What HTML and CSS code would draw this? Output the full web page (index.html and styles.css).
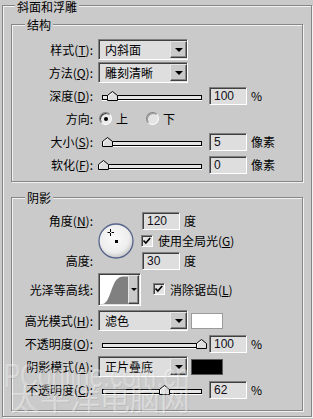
FILE: index.html
```html
<!DOCTYPE html>
<html lang="zh-CN">
<head>
    <meta charset="UTF-8">
    <meta name="viewport" content="width=device-width, initial-scale=1.0">
    <title>斜面和浮雕</title>
    <link rel="stylesheet" href="styles.css">
</head>
<body>
    <div class="group outer">
        <div class="legend outer-legend"><span>斜面和浮雕</span></div>

        <div class="group section first">
            <div class="legend"><span>结构</span></div>
            <div class="rows">
                <div class="row">
                    <span class="lbl">样式(<u>T</u>):</span>
                    <div class="select"><span class="value">内斜面</span><span class="drop"><i></i></span></div>
                </div>
                <div class="row">
                    <span class="lbl">方法(<u>Q</u>):</span>
                    <div class="select"><span class="value">雕刻清晰</span><span class="drop"><i></i></span></div>
                </div>
                <div class="row">
                    <span class="lbl">深度(<u>D</u>):</span>
                    <div class="slider">
                        <span class="thumb" style="left: 9%"><svg width="11" height="10" viewBox="0 0 11 10"><path d="M0.5 9.5V4.5L5.5 0.5L10.5 4.5V9.5Z" fill="#dedede" stroke="#000"/><path d="M1.5 8.5V5L5.5 1.8" fill="none" stroke="#fff"/></svg></span>
                    </div>
                    <span class="field">100</span><span class="unit">%</span>
                </div>
                <div class="row">
                    <span class="lbl">方向:</span>
                    <span class="radio checked"></span><span class="opt">上</span>
                    <span class="radio second"></span><span class="opt">下</span>
                </div>
                <div class="row">
                    <span class="lbl">大小(<u>S</u>):</span>
                    <div class="slider">
                        <span class="thumb" style="left: 4%"><svg width="11" height="10" viewBox="0 0 11 10"><path d="M0.5 9.5V4.5L5.5 0.5L10.5 4.5V9.5Z" fill="#dedede" stroke="#000"/><path d="M1.5 8.5V5L5.5 1.8" fill="none" stroke="#fff"/></svg></span>
                    </div>
                    <span class="field">5</span><span class="unit">像素</span>
                </div>
                <div class="row">
                    <span class="lbl">软化(<u>F</u>):</span>
                    <div class="slider">
                        <span class="thumb" style="left: 0%"><svg width="11" height="10" viewBox="0 0 11 10"><path d="M0.5 9.5V4.5L5.5 0.5L10.5 4.5V9.5Z" fill="#dedede" stroke="#000"/><path d="M1.5 8.5V5L5.5 1.8" fill="none" stroke="#fff"/></svg></span>
                    </div>
                    <span class="field">0</span><span class="unit">像素</span>
                </div>
            </div>
        </div>

        <div class="group section shading">
            <div class="legend"><span>阴影</span></div>
            <div class="rows">
                <div class="angle">
                    <span class="lbl cell top-lbl">角度(<u>N</u>):</span>
                    <div class="dial">
                        <svg width="36" height="36" viewBox="0 0 36 36">
                            <defs>
                                <radialGradient id="dialFill" cx="45%" cy="40%" r="62%">
                                    <stop offset="0" stop-color="#fbfbfb"/>
                                    <stop offset="0.7" stop-color="#ededed"/>
                                    <stop offset="1" stop-color="#c4c4c4"/>
                                </radialGradient>
                            </defs>
                            <circle cx="18" cy="18" r="17" fill="url(#dialFill)" stroke="#56658c" stroke-width="1.3"/>
                            <path d="M9.5 9.5H12M13.5 9.5H16M12.5 6V9M12.5 10V13" stroke="#000" stroke-width="1"/>
                            <rect x="17" y="17" width="3" height="3" fill="#000"/>
                        </svg>
                    </div>
                    <div class="cell angle-val"><span class="field">120</span><span class="unit">度</span></div>
                    <div class="cell global"><span class="check"><svg width="12" height="12" viewBox="0 0 12 12"><path d="M2.5 5.5L4.8 8L9.2 3" fill="none" stroke="#000" stroke-width="1.7"/></svg></span><span class="opt">使用全局光(<u>G</u>)</span></div>
                    <span class="lbl cell low-lbl">高度:</span>
                    <div class="cell low-val"><span class="field">30</span><span class="unit">度</span></div>
                </div>

                <div class="row contour-row">
                    <span class="lbl">光泽等高线:</span>
                    <div class="contour">
                        <svg width="28" height="29" viewBox="0 0 28 29"><path d="M0 29H3C8 28 10 18 13 11C15.5 5 18 2 23 1.5H28V29Z" fill="#808080"/></svg>
                        <span class="drop"><i></i></span>
                    </div>
                    <span class="check"><svg width="12" height="12" viewBox="0 0 12 12"><path d="M2.5 5.5L4.8 8L9.2 3" fill="none" stroke="#000" stroke-width="1.7"/></svg></span><span class="opt">消除锯齿(<u>L</u>)</span>
                </div>

                <div class="row">
                    <span class="lbl">高光模式(<u>H</u>):</span>
                    <div class="select"><span class="value">滤色</span><span class="drop"><i></i></span></div>
                    <span class="swatch white"></span>
                </div>
                <div class="row">
                    <span class="lbl">不透明度(<u>O</u>):</span>
                    <div class="slider">
                        <span class="thumb" style="left: 100%"><svg width="11" height="10" viewBox="0 0 11 10"><path d="M0.5 9.5V4.5L5.5 0.5L10.5 4.5V9.5Z" fill="#dedede" stroke="#000"/><path d="M1.5 8.5V5L5.5 1.8" fill="none" stroke="#fff"/></svg></span>
                    </div>
                    <span class="field">100</span><span class="unit">%</span>
                </div>
                <div class="row">
                    <span class="lbl">阴影模式(<u>A</u>):</span>
                    <div class="select"><span class="value">正片叠底</span><span class="drop"><i></i></span></div>
                    <span class="swatch black"></span>
                </div>
                <div class="row">
                    <span class="lbl">不透明度(<u>C</u>):</span>
                    <div class="slider">
                        <span class="thumb" style="left: 62%"><svg width="11" height="10" viewBox="0 0 11 10"><path d="M0.5 9.5V4.5L5.5 0.5L10.5 4.5V9.5Z" fill="#dedede" stroke="#000"/><path d="M1.5 8.5V5L5.5 1.8" fill="none" stroke="#fff"/></svg></span>
                    </div>
                    <span class="field">62</span><span class="unit">%</span>
                </div>
            </div>
        </div>
    </div>

    <div class="watermark">
        <div class="wm-en">PConline.com.cn</div>
        <div class="wm-cn">太平洋电脑网</div>
    </div>
</body>
</html>
```

FILE: styles.css
```css
body {
    margin: 0;
    width: 313px;
    height: 419px;
    overflow: hidden;
    position: relative;
    background: #cacaca;
    font-family: "Noto Sans CJK SC", sans-serif;
    font-size: 12px;
    color: #000;
}
u {
    text-decoration: underline;
    text-underline-offset: 1px;
}
.group {
    box-sizing: border-box;
    border: 1px solid #868686;
    box-shadow: inset 1px 1px 0 #f2f2f2, 1px 1px 0 #f2f2f2;
}
.outer {
    width: 310px;
    margin: 5px 0 0 2px;
    padding: 0 8px 5px 8px;
}
.legend {
    height: 14px;
    line-height: 14px;
    margin-top: -7px;
}
.legend span {
    background: #cacaca;
    padding: 0 2px;
    margin-left: 13px;
}
.outer-legend {
    margin-top: -6px;
}
.outer-legend span {
    margin-left: 4px;
}
.section {
    width: 292px;
    margin-top: 10px;
}
.shading {
    margin-top: 15px;
}
.rows {
    padding: 6px 0 5px;
}
.shading .rows {
    padding: 4px 0 9px;
}
.row {
    display: flex;
    align-items: center;
    height: 23px;
}
.lbl {
    flex: none;
    width: 81px;
    margin-right: 5px;
    text-align: right;
    white-space: nowrap;
}
.select {
    box-sizing: border-box;
    display: flex;
    align-items: center;
    width: 90px;
    height: 21px;
    padding: 1px 0;
    border: 1px solid;
    border-color: #808080 #fff #fff #808080;
    box-shadow: inset 1px 1px 0 #404040;
    background: #dedede;
}
.select .value {
    flex: 1;
    padding-left: 6px;
    white-space: nowrap;
}
.drop {
    box-sizing: border-box;
    display: flex;
    align-items: center;
    justify-content: center;
    width: 17px;
    height: 17px;
    border: 1px solid;
    border-color: #e6e6e6 #404040 #404040 #e6e6e6;
    box-shadow: inset -1px -1px 0 #868686;
    background: #cacaca;
}
.drop i {
    width: 0;
    height: 0;
    border-top: 4px solid #000;
    border-left: 4px solid transparent;
    border-right: 4px solid transparent;
}
.slider {
    position: relative;
    box-sizing: border-box;
    width: 100px;
    height: 5px;
    margin: 4px 7px 0 4px;
    border: 1px solid #000;
    background: #e6e6e6;
    box-shadow: 0 1px 0 #fff;
}
.thumb {
    position: absolute;
    bottom: -2px;
    margin-left: -5px;
    width: 11px;
    height: 10px;
}
.thumb svg {
    display: block;
}
.field {
    box-sizing: border-box;
    width: 38px;
    height: 18px;
    padding-left: 4px;
    border: 1px solid;
    border-color: #808080 #fff #fff #808080;
    box-shadow: inset 1px 1px 0 #404040;
    background: #dedede;
    font-family: "Liberation Sans", "Noto Sans CJK SC", sans-serif;
    font-size: 12px;
    line-height: 16px;
    color: #101018;
}
.unit {
    margin-left: 4px;
}
.radio {
    position: relative;
    box-sizing: border-box;
    width: 13px;
    height: 13px;
    margin-left: 1px;
    border-radius: 50%;
    border: 1px solid;
    border-color: #808080 #fff #fff #808080;
    box-shadow: inset 1px 1px 0 #404040;
    background: #ececec;
}
.radio.checked::after {
    content: "";
    position: absolute;
    left: 3.5px;
    top: 3.5px;
    width: 4px;
    height: 4px;
    border-radius: 50%;
    background: #000;
}
.radio.second {
    margin-left: 18px;
    box-shadow: inset 1px 1px 0 #a0a0a0;
    background: #e4e4e4;
}
.opt {
    margin-left: 4px;
    white-space: nowrap;
}
.check {
    flex: none;
    box-sizing: border-box;
    width: 12px;
    height: 12px;
    border: 1px solid;
    border-color: #808080 #fff #fff #808080;
    box-shadow: inset 1px 1px 0 #404040;
    background: #e4e4e4;
}
.check svg {
    display: block;
    margin: -1px 0 0 -1px;
}
.angle {
    display: grid;
    grid-template-columns: 86px 43px auto;
    grid-template-rows: 23px 17px 23px;
}
.cell {
    display: flex;
    align-items: center;
}
.lbl.cell {
    justify-content: flex-end;
}
.top-lbl {
    grid-column: 1;
    grid-row: 1;
}
.angle-val {
    grid-column: 3;
    grid-row: 1;
}
.global {
    grid-column: 3;
    grid-row: 2;
}
.low-lbl {
    grid-column: 1;
    grid-row: 3;
}
.low-val {
    grid-column: 3;
    grid-row: 3;
}
.angle .field {
    margin-left: 1px;
}
.angle .opt {
    margin-left: 5px;
}
.dial {
    grid-column: 2;
    grid-row: 1 / 4;
    align-self: start;
    margin-top: 14px;
    height: 36px;
}
.dial svg {
    display: block;
}
.contour-row {
    height: 34px;
    margin-bottom: 3px;
}
.contour {
    box-sizing: border-box;
    display: flex;
    width: 43px;
    height: 33px;
    padding: 1px 0 1px 1px;
    border: 1px solid;
    border-color: #808080 #fff #fff #808080;
    box-shadow: inset 1px 1px 0 #404040;
    background: #dedede;
}
.contour svg {
    display: block;
    background: #fff;
}
.contour .drop {
    width: 11px;
    height: 29px;
}
.contour .drop i {
    border-top-width: 3px;
    border-left-width: 3px;
    border-right-width: 3px;
}
.contour-row .check {
    margin-left: 12px;
}
.contour-row .opt {
    margin-left: 5px;
}
.swatch {
    box-sizing: border-box;
    width: 32px;
    height: 16px;
    margin-left: 3px;
    border: 1px solid #9a9a9a;
}
.swatch.white {
    background: #fff;
}
.swatch.black {
    background: #000;
    border-color: #5a5a5a;
}
.watermark {
    position: absolute;
    left: 4px;
    top: 358px;
    pointer-events: none;
    color: rgba(255, 255, 255, 0.4);
    text-shadow: 1px 1px 0 rgba(0, 0, 0, 0.08);
}
.wm-en {
    font-family: "Liberation Sans", sans-serif;
    font-size: 34px;
    line-height: 34px;
    transform: scaleX(0.72);
    transform-origin: left top;
    white-space: nowrap;
}
.wm-cn {
    margin: -10px 0 0 6px;
    font-size: 30px;
    line-height: 30px;
    white-space: nowrap;
}
```
